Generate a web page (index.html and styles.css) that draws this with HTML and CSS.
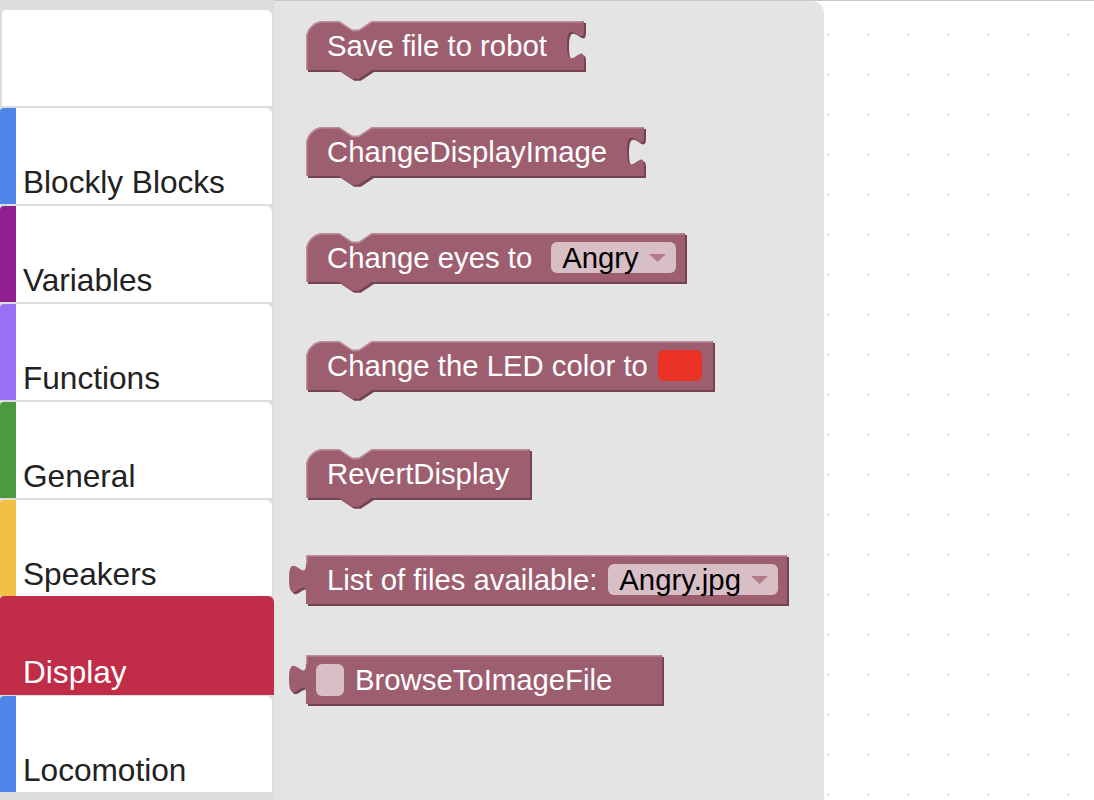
FILE: index.html
```html
<!DOCTYPE html>
<html>
<head>
<meta charset="utf-8">
<title>Blockly Toolbox</title>
<link rel="stylesheet" href="styles.css">
</head>
<body>
<div class="app">
  <nav class="toolbox">
    <div class="tb-item blank"></div>
    <div class="tb-item c-blue"><span>Blockly Blocks</span></div>
    <div class="tb-item c-purple"><span>Variables</span></div>
    <div class="tb-item c-lilac"><span>Functions</span></div>
    <div class="tb-item c-green"><span>General</span></div>
    <div class="tb-item c-yellow"><span>Speakers</span></div>
    <div class="tb-item selected"><span>Display</span></div>
    <div class="tb-item c-blue"><span>Locomotion</span></div>
  </nav>
  <main class="workspace">
    <section class="flyout">
      <div class="block">
        <svg class="shape" width="278" height="49">
          <path class="dark" transform="translate(2,2)" d="M0,17.6A17.6,17.6 0 0 1 17.6,0H33l13.2,8.8h6.6l13.2,-8.8H278V9c0,20 -17,-16 -17,15s17,-5 17,15V49H66l-13.2,8.8h-6.6l-13.2,-8.8H0Z"/>
          <path class="fill" d="M0,17.6A17.6,17.6 0 0 1 17.6,0H33l13.2,8.8h6.6l13.2,-8.8H278V9c0,20 -17,-16 -17,15s17,-5 17,15V49H66l-13.2,8.8h-6.6l-13.2,-8.8H0Z"/>
          <path class="hl" d="M0.75,49V17.6A16.85,16.85 0 0 1 17.6,0.75H33l13.2,8.8h6.6l13.2,-8.8H277.25"/>
        </svg>
        <div class="content"><span class="label">Save file to robot</span></div>
      </div>

      <div class="block">
        <svg class="shape" width="338" height="49">
          <path class="dark" transform="translate(2,2)" d="M0,17.6A17.6,17.6 0 0 1 17.6,0H33l13.2,8.8h6.6l13.2,-8.8H338V9c0,20 -17,-16 -17,15s17,-5 17,15V49H66l-13.2,8.8h-6.6l-13.2,-8.8H0Z"/>
          <path class="fill" d="M0,17.6A17.6,17.6 0 0 1 17.6,0H33l13.2,8.8h6.6l13.2,-8.8H338V9c0,20 -17,-16 -17,15s17,-5 17,15V49H66l-13.2,8.8h-6.6l-13.2,-8.8H0Z"/>
          <path class="hl" d="M0.75,49V17.6A16.85,16.85 0 0 1 17.6,0.75H33l13.2,8.8h6.6l13.2,-8.8H337.25"/>
        </svg>
        <div class="content"><span class="label">ChangeDisplayImage</span></div>
      </div>

      <div class="block">
        <svg class="shape" width="379" height="49">
          <path class="dark" transform="translate(2,2)" d="M0,17.6A17.6,17.6 0 0 1 17.6,0H33l13.2,8.8h6.6l13.2,-8.8H379V49H66l-13.2,8.8h-6.6l-13.2,-8.8H0Z"/>
          <path class="fill" d="M0,17.6A17.6,17.6 0 0 1 17.6,0H33l13.2,8.8h6.6l13.2,-8.8H379V49H66l-13.2,8.8h-6.6l-13.2,-8.8H0Z"/>
          <path class="hl" d="M0.75,49V17.6A16.85,16.85 0 0 1 17.6,0.75H33l13.2,8.8h6.6l13.2,-8.8H378.25"/>
        </svg>
        <div class="content gap-wide"><span class="label">Change eyes to</span><span class="dd"><span>Angry</span><svg class="arrow" width="17" height="8"><polygon points="0,0 17,0 8.5,8"/></svg></span></div>
      </div>

      <div class="block b4">
        <svg class="shape" width="407" height="49">
          <path class="dark" transform="translate(2,2)" d="M0,17.6A17.6,17.6 0 0 1 17.6,0H33l13.2,8.8h6.6l13.2,-8.8H407V49H66l-13.2,8.8h-6.6l-13.2,-8.8H0Z"/>
          <path class="fill" d="M0,17.6A17.6,17.6 0 0 1 17.6,0H33l13.2,8.8h6.6l13.2,-8.8H407V49H66l-13.2,8.8h-6.6l-13.2,-8.8H0Z"/>
          <path class="hl" d="M0.75,49V17.6A16.85,16.85 0 0 1 17.6,0.75H33l13.2,8.8h6.6l13.2,-8.8H406.25"/>
        </svg>
        <div class="content gap-mid"><span class="label">Change the LED color to</span><span class="swatch"></span></div>
      </div>

      <div class="block b5">
        <svg class="shape" width="224" height="49">
          <path class="dark" transform="translate(2,2)" d="M0,17.6A17.6,17.6 0 0 1 17.6,0H33l13.2,8.8h6.6l13.2,-8.8H224V49H66l-13.2,8.8h-6.6l-13.2,-8.8H0Z"/>
          <path class="fill" d="M0,17.6A17.6,17.6 0 0 1 17.6,0H33l13.2,8.8h6.6l13.2,-8.8H224V49H66l-13.2,8.8h-6.6l-13.2,-8.8H0Z"/>
          <path class="hl" d="M0.75,49V17.6A16.85,16.85 0 0 1 17.6,0.75H33l13.2,8.8h6.6l13.2,-8.8H223.25"/>
        </svg>
        <div class="content"><span class="label">RevertDisplay</span></div>
      </div>

      <div class="block">
        <svg class="shape" width="481" height="49">
          <path class="dark" transform="translate(2,2)" d="M0,0H481V49H0V39c0,-20 -17,16 -17,-15s17,5 17,-15Z"/>
          <path class="fill" d="M0,0H481V49H0V39c0,-20 -17,16 -17,-15s17,5 17,-15Z"/>
          <path class="hl" d="M0.75,9V0.75H480.25"/>
        </svg>
        <div class="content"><span class="label">List of files available:</span><span class="dd"><span>Angry.jpg</span><svg class="arrow" width="17" height="8"><polygon points="0,0 17,0 8.5,8"/></svg></span></div>
      </div>

      <div class="block b7">
        <svg class="shape" width="356" height="49">
          <path class="dark" transform="translate(2,2)" d="M0,0H356V49H0V39c0,-20 -17,16 -17,-15s17,5 17,-15Z"/>
          <path class="fill" d="M0,0H356V49H0V39c0,-20 -17,16 -17,-15s17,5 17,-15Z"/>
          <path class="hl" d="M0.75,9V0.75H355.25"/>
        </svg>
        <div class="content tight"><span class="img-slot"></span><span class="label">BrowseToImageFile</span></div>
      </div>
    </section>
  </main>
</div>
</body>
</html>
```

FILE: styles.css
```css
* { box-sizing: border-box; }

html, body {
  margin: 0;
  padding: 0;
}

body {
  width: 1094px;
  height: 800px;
  overflow: hidden;
  background: #fff;
  font-family: "Liberation Sans", Arial, Helvetica, sans-serif;
}

.app {
  display: flex;
  height: 800px;
}

/* ---------- Toolbox ---------- */
.toolbox {
  width: 274px;
  flex: none;
  background: #dddddd;
  display: flex;
  flex-direction: column;
  gap: 2px;
  padding-top: 10px;
}

.tb-item {
  flex: none;
  width: 272px;
  height: 96px;
  background: #fff;
  border-left: 16px solid transparent;
  border-radius: 4px 6px 0 0;
  display: flex;
  align-items: flex-end;
  padding: 0 0 6px 7px;
  font-size: 31.6px;
  line-height: 31px;
  color: #222222;
  white-space: nowrap;
}

.tb-item.blank {
  width: 270px;
  margin-left: 2px;
  border-left: 0;
}

.c-blue   { border-left-color: #4f85eb; }
.c-purple { border-left-color: #901f8f; }
.c-lilac  { border-left-color: #9b6ff5; }
.c-green  { border-left-color: #4b9a3f; }
.c-yellow { border-left-color: #f3c044; }

.tb-item.selected {
  width: 274px;
  height: 99px;
  margin: -2px 0 -1px;
  border-left: 0;
  background: #c12c48;
  color: #fff;
  padding: 0 0 7px 23px;
}

/* ---------- Workspace ---------- */
.workspace {
  flex: 1;
  height: 800px;
  border-top: 1px solid #c8c8c8;
  background-color: #fff;
  background-image: conic-gradient(from 270deg at 1px 1px, #808080 90deg, transparent 0);
  background-size: 40px 40px;
  background-position: 34px 34px;
  background-origin: border-box;
}

.flyout {
  width: 550px;
  height: 100%;
  background: rgba(221, 221, 221, 0.8);
  border-top-right-radius: 12px;
  display: flex;
  flex-direction: column;
  align-items: flex-start;
  gap: 57px;
  padding: 20px 0 0 32px;
}

/* ---------- Blocks ---------- */
.block {
  display: grid;
}

.block > * {
  grid-area: 1 / 1;
}

.b4 { margin-top: 2px; }
.b5 { margin-top: 2px; }
.b7 { margin-top: -6px; }

.shape {
  display: block;
  overflow: visible;
}

.shape .fill { fill: #9d5e6f; }
.shape .dark { fill: #74434f; }
.shape .hl {
  fill: none;
  stroke: #bd8e9b;
  stroke-width: 1.5;
}

.content {
  height: 49px;
  display: flex;
  align-items: center;
  gap: 11px;
  padding-left: 21px;
  font-size: 29.3px;
  line-height: 29px;
  white-space: nowrap;
}

.content.gap-wide { gap: 19px; }
.content.gap-mid { gap: 10px; }
.content.tight { gap: 11px; padding-left: 10px; }

.label {
  color: #fff;
}

.dd {
  display: flex;
  align-items: center;
  gap: 10px;
  height: 31px;
  padding: 0 10px 0 11px;
  border-radius: 6px;
  background: rgba(255, 255, 255, 0.6);
  color: #000;
}

.arrow {
  display: block;
  fill: #b27b8a;
}

.swatch {
  width: 44px;
  height: 31px;
  border-radius: 6px;
  background: #ea3325;
}

.img-slot {
  width: 28px;
  height: 32px;
  border-radius: 6px;
  background: rgba(255, 255, 255, 0.6);
}
```
